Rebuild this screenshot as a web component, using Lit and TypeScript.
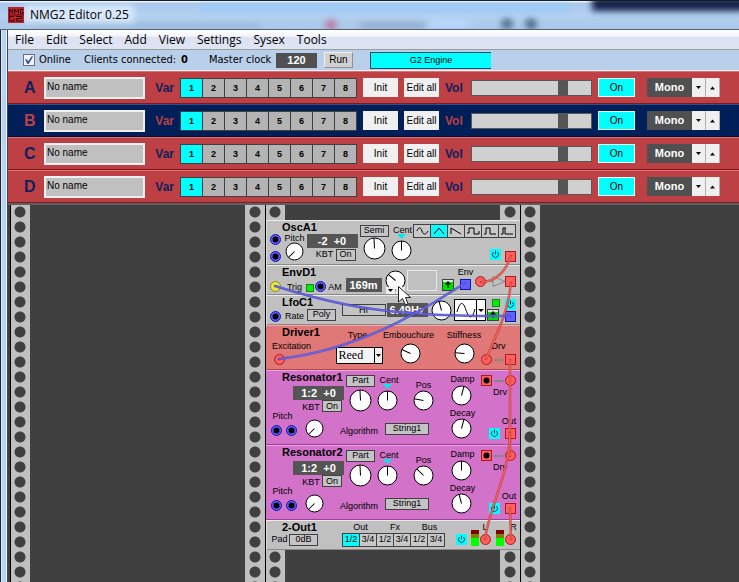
import { LitElement, html, svg, css, nothing, TemplateResult } from "lit";
import { customElement, property, state } from "lit/decorators.js";
import { classMap } from "lit/directives/class-map.js";
import { styleMap } from "lit/directives/style-map.js";

type Kind =
  | "label" | "key" | "display" | "knob" | "centre" | "jack" | "power" | "lamp"
  | "waves" | "routes" | "arrowkey" | "graph" | "amp" | "link" | "spin"
  | "shape" | "model" | "meter";

/** x and y are the centre of the control on its module's panel. */
interface Control {
  kind: Kind;
  x: number;
  y: number;
  text?: string;
  width?: "s" | "m" | "l" | "xl";
  size?: number;
  angle?: number;
  tone?: "red" | "blue" | "yellow";
  form?: "round" | "square";
  hole?: boolean;
}

interface Module {
  name: string;
  units: number;
  skin: "grey" | "coral" | "orchid";
  controls: Control[];
}

const UNIT = 15;
const PITCH = 3;

const label = (text: string, x: number, y: number): Control => ({ kind: "label", text, x, y });
const key = (text: string, x: number, y: number, width: Control["width"] = "s"): Control => ({ kind: "key", text, x, y, width });
const display = (text: string, x: number, y: number, width: Control["width"] = "l"): Control => ({ kind: "display", text, x, y, width });
const knob = (text: string, x: number, y: number, angle: number, size = 21): Control => ({ kind: "knob", text, x, y, angle, size });
const jack = (tone: Control["tone"], form: Control["form"], x: number, y: number, hole = false): Control => ({ kind: "jack", tone, form, x, y, hole });
const part = (kind: Kind, x: number, y: number): Control => ({ kind, x, y });

const resonator = (name: string, pos: number, damp: number, decay: number): Module => ({
  name, units: 5, skin: "orchid",
  controls: [
    key("Part", 94, 10, "m"), display("1:2  +0", 53, 22),
    label("KBT", 45, 37), key("On", 66, 36),
    knob("Coarse", 94, 30, -3, 23),
    label("Cent", 123, 11), part("centre", 121, 17), knob("Cent", 121, 30, 0),
    label("Pos", 157, 15), knob("Pos", 157, 30, pos),
    label("Damp", 197, 9), knob("Damp", 195, 25, damp),
    label("Decay", 196, 44), knob("Decay", 195, 59, decay),
    label("Pitch", 16, 46), jack("blue", "round", 11, 60, true), jack("blue", "round", 26, 60, true),
    knob("Pitch", 48, 59, -135, 19),
    label("Algorithm", 93, 61), key("String1", 141, 59, "l"),
    jack("red", "square", 221, 11, true), part("link", 233, 11), jack("red", "round", 245, 11),
    label("Drv", 234, 23), label("Out", 243, 51),
    part("power", 228, 63), jack("red", "square", 245, 63),
  ],
});

const MODULES: Module[] = [
  {
    name: "OscA1", units: 3, skin: "grey",
    controls: [
      jack("blue", "round", 9, 19, true), label("Pitch", 28, 18),
      jack("blue", "round", 9, 36, true), knob("Pitch", 28, 31, -135, 19),
      display("-2  +0", 66, 21), label("KBT", 59, 35), key("On", 79, 35),
      key("Semi", 108, 10, "m"), knob("Semi", 108, 29, -3, 23),
      label("Cent", 137, 11), part("centre", 135, 17), knob("Cent", 135, 30, 0),
      part("waves", 198, 11), part("power", 229, 35), jack("red", "square", 245, 36),
    ],
  },
  {
    name: "EnvD1", units: 2, skin: "grey",
    controls: [
      jack("yellow", "round", 9, 21), label("Trig", 29, 22), part("lamp", 43, 22),
      jack("blue", "round", 54, 21, true), label("AM", 69, 22),
      display("169m", 98, 19, "s"), knob("Decay", 129, 15, -50), part("spin", 129, 26),
      part("graph", 156, 15), label("Env", 199, 8), part("arrowkey", 181, 20),
      jack("blue", "square", 199, 19), jack("red", "round", 215, 17),
      part("amp", 229, 17), jack("red", "square", 245, 17),
    ],
  },
  {
    name: "LfoC1", units: 2, skin: "grey",
    controls: [
      jack("blue", "round", 9, 21, true), label("Rate", 28, 21), key("Poly", 56, 20, "m"),
      key("HI", 97, 15, "l"), display("6.49Hz", 141, 15, "m"), knob("Rate", 175, 15, -15),
      part("shape", 204, 15), part("lamp", 229, 8), part("power", 244, 9),
      part("arrowkey", 227, 20), jack("blue", "square", 244, 21),
    ],
  },
  {
    name: "Driver1", units: 3, skin: "coral",
    controls: [
      label("Excitation", 25, 21), jack("red", "round", 13, 35),
      label("Type", 91, 10), part("model", 93, 30),
      label("Embouchure", 143, 10), knob("Embouchure", 144, 28, -65),
      label("Stiffness", 198, 10), knob("Stiffness", 198, 28, -85),
      label("Drv", 233, 21), jack("red", "round", 220, 34), part("link", 233, 34),
      jack("red", "square", 244, 34),
    ],
  },
  resonator("Resonator1", -80, 15, 15),
  resonator("Resonator2", -45, 0, -15),
  {
    name: "2-Out1", units: 2, skin: "grey",
    controls: [
      label("Pad", 13, 20), key("0dB", 37, 20, "m"),
      label("Out", 95, 7), label("Fx", 129, 7), label("Bus", 163, 7),
      part("routes", 128, 19), part("power", 195, 19), part("meter", 208, 18),
      label("L", 219, 7), jack("red", "round", 219, 19),
      part("meter", 234, 18), label("R", 247, 7), jack("red", "round", 245, 19),
    ],
  },
];

const WAVES: Array<[string, string]> = [
  ["Sine", "M3 6 C4 2 7 2 8 6 S12 10 14 6"],
  ["Triangle", "M3 9 L8 3 L13 9"],
  ["Saw", "M3 9 V3 L13 9"],
  ["Square", "M2 8 H4 V3 H9 V9 H14 V6"],
  ["Pulse 25", "M2 9 H4 V3 H8 V9 H14"],
  ["Pulse 10", "M2 9 H4 V3 H7 M6 3 V9 H14"],
];

@customElement("synth-knob")
class SynthKnob extends LitElement {
  @property({ type: Number }) size = 21;
  @property({ type: Number }) angle = 0;
  @property() name = "";

  static styles = css`
    :host { display: block; }
    .dial { display: block; }
  `;

  render() {
    const c = this.size / 2;
    const r = c - 1;
    return html`<svg class="dial" width=${this.size} height=${this.size} role="slider" tabindex="0"
      aria-label=${this.name} aria-valuemin="-150" aria-valuemax="150" aria-valuenow=${this.angle}>
      <circle cx=${c} cy=${c} r=${r} fill="#fff" stroke="#000"></circle>
      <line x1=${c} y1=${c} x2=${c} y2="1" stroke="#000" transform="rotate(${this.angle} ${c} ${c})"></line>
    </svg>`;
  }
}

@customElement("synth-jack")
class SynthJack extends LitElement {
  @property() tone = "red";
  @property() form = "round";
  @property({ type: Boolean }) hole = false;

  static styles = css`
    :host { display: block; }
    .jack { display: block; }
  `;

  render() {
    const tones: Record<string, [string, string]> = {
      red: ["#ff5f5f", "#b01818"],
      blue: ["#6060ff", "#1414a8"],
      yellow: ["#e8e840", "#8a8a10"],
    };
    const [fill, edge] = tones[this.tone];
    return html`<svg class="jack" width="11" height="11" aria-hidden="true">
      ${this.form === "round"
        ? svg`<circle cx="5.5" cy="5.5" r="5" fill=${fill} stroke=${edge}></circle>`
        : svg`<rect x="0.5" y="0.5" width="10" height="10" fill=${fill} stroke=${edge}></rect>`}
      ${this.hole ? svg`<circle cx="5.5" cy="5.5" r="3" fill="#000"></circle>` : nothing}
    </svg>`;
  }
}

@customElement("synth-module")
class SynthModule extends LitElement {
  @property({ attribute: false }) module!: Module;

  static styles = css`
    :host { display: block; font: 9px/9px "Liberation Sans", Arial, sans-serif; color: #000; }
    .panel {
      display: grid;
      grid-template-columns: repeat(84, 3px);
      justify-items: center;
      align-items: center;
      white-space: nowrap;
      background: #c0c0c0;
      box-shadow: inset 0 1px #ececec, inset 1px 0 #dcdcdc, inset 0 -1px #8a8a8a;
    }
    .coral { background: #e07878; box-shadow: inset 0 1px #f4a8a8, inset 0 -1px #b04848; }
    .orchid { background: #d272c8; box-shadow: inset 0 1px #f0a4e8, inset 0 -1px #a0409a; }
    .title {
      grid-area: 2 / 6 / span 3 / span 20;
      justify-self: start;
      margin: 0;
      padding-left: 1px;
      font-size: 11px;
      line-height: 9px;
      font-weight: bold;
    }
    button, select {
      box-sizing: border-box;
      margin: 0;
      padding: 0;
      font: inherit;
      color: #000;
      border: 1px solid #404040;
      border-radius: 0;
      background: #c4c4c4;
    }
    .key { height: 12px; width: 20px; }
    .key.m { width: 29px; }
    .key.l { width: 44px; }
    .display {
      width: 36px;
      height: 14px;
      line-height: 14px;
      white-space: pre;
      text-align: center;
      font-size: 11px;
      font-weight: bold;
      color: #fff;
      background: #555;
    }
    .display.m { width: 41px; }
    .display.l { width: 51px; }
    .segments { display: flex; border: 1px solid #404040; gap: 1px; background: #404040; }
    .segments button { width: 16px; height: 12px; border: 0; background: #c8c8c8; }
    .segments .on { background: #00ffff; }
    .icon { display: block; }
    .power { width: 11px; height: 11px; border: 0; background: #00ffff; }
    .lamp { width: 8px; height: 8px; box-sizing: border-box; border: 1px solid #208020; background: #00f000; }
    .arrowkey { width: 12px; height: 12px; background: linear-gradient(#d8e8d8 2px, #00e000 2px); }
    .graph { width: 30px; height: 21px; box-sizing: border-box; border: 1px solid #e8e8e8; }
    .spin { display: flex; gap: 1px; }
    .spin button { width: 9px; height: 7px; border: 0; background: #f0f0f0; }
    .shape { width: 32px; height: 22px; background: #fff; border-color: #000; }
    .model {
      width: 47px;
      height: 17px;
      padding-left: 2px;
      appearance: none;
      border-color: #000;
      font: 12px/15px "Liberation Serif", "Times New Roman", serif;
      background: #f4f4f4;
    }
    .combo { display: flex; }
    .combo .drop { width: 9px; height: 17px; border-color: #000; margin-left: -9px; background: #f0f0f0; }
    .meter { width: 8px; height: 16px; background: linear-gradient(#800000 4px, #808000 4px 8px, #00ff00 8px); }
  `;

  private area(x: number, y: number) {
    const track = (v: number) => {
      const half = Math.round((v * 2) / PITCH);
      const span = half % 2 ? 3 : 2;
      return [(half - span) / 2 + 1, span];
    };
    const [col, cols] = track(x);
    const [row, rows] = track(y);
    return { gridArea: `${row} / ${col} / span ${rows} / span ${cols}` };
  }

  private draw(c: Control): TemplateResult {
    const at = styleMap(this.area(c.x, c.y));
    switch (c.kind) {
      case "label":
        return html`<span style=${at}>${c.text}</span>`;
      case "key":
        return html`<button class="key ${c.width}" style=${at}>${c.text}</button>`;
      case "display":
        return html`<output class="display ${c.width}" style=${at}>${c.text}</output>`;
      case "knob":
        return html`<synth-knob style=${at} .size=${c.size} .angle=${c.angle} .name=${c.text}></synth-knob>`;
      case "jack":
        return html`<synth-jack style=${at} .tone=${c.tone} .form=${c.form} .hole=${c.hole}></synth-jack>`;
      case "centre":
        return html`<svg class="icon" style=${at} width="9" height="5"><path d="M0 0H9L4.5 5Z" fill="#00e8f0"></path></svg>`;
      case "power":
        return html`<button class="power" style=${at} aria-label="Power"><svg class="icon" width="11" height="11">
          <path d="M3.5 3.2 A3 3 0 1 0 7.5 3.2 M5.5 1.5 V5.5" fill="none" stroke="#103050"></path></svg></button>`;
      case "lamp":
        return html`<span class="lamp" style=${at}></span>`;
      case "waves":
        return html`<div class="segments" style=${at} role="group" aria-label="Waveform">
          ${WAVES.map(([name, d], i) => html`<button class=${classMap({ on: i === 1 })} aria-label=${name}>
            <svg class="icon" width="16" height="12"><path d=${d} fill="none" stroke="#000"></path></svg></button>`)}
        </div>`;
      case "routes":
        return html`<div class="segments" style=${at} role="group" aria-label="Destination">
          ${["1/2", "3/4", "1/2", "3/4", "1/2", "3/4"].map((t, i) => html`<button class=${classMap({ on: i === 0 })}>${t}</button>`)}
        </div>`;
      case "arrowkey":
        return html`<button class="arrowkey" style=${at} aria-label="Output type"><svg class="icon" width="10" height="10">
          <path d="M5 1 L8 4.5 H2Z" fill="#000"></path><path d="M5 4V8" stroke="#000"></path></svg></button>`;
      case "graph":
        return html`<span class="graph" style=${at}></span>`;
      case "amp":
        return html`<svg class="icon" style=${at} width="22" height="11">
          <path d="M0 5.5H8M8 .5V10.5L20 5.5Z" fill="none" stroke="#888"></path></svg>`;
      case "link":
        return html`<svg class="icon" style=${at} width="10" height="2"><path d="M0 1H10" stroke="#888" stroke-width="2"></path></svg>`;
      case "spin":
        return html`<div class="spin" style=${at}>
          <button aria-label="Decrease"><svg class="icon" width="9" height="7"><path d="M2 2H7L4.5 5Z"></path></svg></button>
          <button aria-label="Increase"><svg class="icon" width="9" height="7"><path d="M2 5H7L4.5 2Z"></path></svg></button>
        </div>`;
      case "shape":
        return html`<button class="shape" style=${at} aria-label="Wave shape"><svg class="icon" width="30" height="20">
          <path d="M2 12 C5 1 8 1 11 10 S17 20 20 9" fill="none" stroke="#000"></path>
          <path d="M21.5 0V20" stroke="#000"></path><path d="M23 9H29L26 12Z"></path></svg></button>`;
      case "model":
        return html`<div class="combo" style=${at}><select class="model" aria-label="Type"><option>Reed</option></select>
          <button class="drop" aria-hidden="true" tabindex="-1"><svg class="icon" width="7" height="15"><path d="M1 6H6L3.5 9Z"></path></svg></button></div>`;
      case "meter":
        return html`<span class="meter" style=${at}></span>`;
    }
  }

  render() {
    const m = this.module;
    const rows = { gridTemplateRows: `repeat(${(m.units * UNIT) / PITCH}, ${PITCH}px)` };
    return html`<section class="panel ${m.skin}" style=${styleMap(rows)}>
      <h2 class="title">${m.name}</h2>
      ${m.controls.map((c) => this.draw(c))}
    </section>`;
  }
}

@customElement("slot-strip")
class SlotStrip extends LitElement {
  @property() name = "A";
  @property({ type: Boolean, reflect: true }) selected = false;
  @state() private variation = 1;

  static styles = css`
    :host {
      display: flex;
      align-items: center;
      gap: 6px;
      height: 33px;
      box-sizing: border-box;
      padding-left: 16px;
      border-top: 1px solid #e07070;
      border-bottom: 1px solid #801820;
      background: #bc4044;
      color: #10205c;
      font: 10px/12px "Liberation Sans", Arial, sans-serif;
      white-space: nowrap;
    }
    :host([selected]) { background: #001e58; color: #bc4044; border-top-color: #30508c; border-bottom-color: #001038; }
    .slot { width: 14px; margin: 0; font-size: 16px; line-height: 18px; font-weight: bold; }
    .patch {
      box-sizing: border-box;
      width: 101px;
      height: 22px;
      padding: 0 1px 2px;
      border: 2px solid #f0f0f0;
      background: #c0c0c0;
      color: #000;
      font: inherit;
    }
    .tag { width: 20px; font-size: 12px; font-weight: bold; }
    .tag.var { width: 23px; text-align: right; }
    button { box-sizing: border-box; height: 19px; margin: 0; padding: 0; border: 0; border-radius: 0; color: #000; font: inherit; }
    .variations { display: flex; gap: 1px; padding: 1px; background: #404040; }
    .variations button { width: 21px; height: 18px; background: #b4b4b4; font-size: 9px; font-weight: bold; }
    .variations .on { background: #00ffff; }
    .plain { width: 35px; background: #f0f0f0; }
    .level {
      appearance: none;
      box-sizing: border-box;
      width: 121px;
      height: 16px;
      margin: 0;
      border: 1px solid #585858;
      background: #d0d0d0;
    }
    .level::-webkit-slider-thumb { appearance: none; width: 10px; height: 14px; background: #555; }
    .active { width: 37px; border: 1px solid #e8f8f8; background: #00ffff; }
    .mode { display: flex; margin-left: 6px; }
    .mode output {
      width: 45px;
      height: 19px;
      line-height: 19px;
      text-align: center;
      font-size: 11px;
      font-weight: bold;
      color: #fff;
      background: #505050;
    }
    .mode button { width: 14px; background: #f0f0f0; border-right: 1px solid #b0b0b0; }
    .icon { display: block; margin: auto; }
  `;

  render() {
    return html`
      <h2 class="slot">${this.name}</h2>
      <input class="patch" aria-label="Patch name" .value=${"No name"} />
      <span class="tag var">Var</span>
      <div class="variations" role="group" aria-label="Variation">
        ${[1, 2, 3, 4, 5, 6, 7, 8].map((n) => html`<button class=${classMap({ on: n === this.variation })}
          @click=${() => (this.variation = n)}>${n}</button>`)}
      </div>
      <button class="plain">Init</button>
      <button class="plain">Edit all</button>
      <label class="tag" for="level">Vol</label>
      <input id="level" class="level" type="range" min="0" max="127" value="100" />
      <button class="active">On</button>
      <div class="mode">
        <output>Mono</output>
        <button aria-label="Fewer voices"><svg class="icon" width="7" height="4"><path d="M1 0H6L3.5 3Z"></path></svg></button>
        <button aria-label="More voices"><svg class="icon" width="7" height="4"><path d="M1 3.5H6L3.5 .5Z"></path></svg></button>
      </div>`;
  }
}

@customElement("app-root")
class AppRoot extends LitElement {
  static styles = css`
    :host {
      display: flex;
      flex-direction: column;
      min-height: 100vh;
      box-sizing: border-box;
      overflow: hidden;
      font: 11px/14px "DejaVu Sans Condensed", "DejaVu Sans", sans-serif;
      color: #000;
    }
    .titlebar {
      position: relative;
      display: flex;
      align-items: center;
      gap: 6px;
      height: 30px;
      box-sizing: border-box;
      padding-left: 8px;
      border-top: 1px solid #181c24;
      border-bottom: 1px solid #56606e;
      background: linear-gradient(#eaf4ff 1px, #a8c8ec 2px, #b4d0f0 50%, #a9c8ea);
    }
    .glass { position: absolute; inset: 0; width: 100%; height: 100%; }
    .logo { position: relative; display: block; }
    .caption { position: relative; margin: 0; font: 12px/16px "Open Sans", "Noto Sans", sans-serif; }
    .frame {
      flex: 1;
      display: flex;
      flex-direction: column;
      padding-left: 8px;
      background: linear-gradient(90deg, #20242c 1px, #dceafa 1px 2px, #b8d4f4 2px 6px, #e8f0fa 6px 7px, #404850 7px);
    }
    .menu {
      display: flex;
      gap: 12px;
      height: 20px;
      padding-left: 7px;
      align-items: center;
      box-sizing: border-box;
      border-bottom: 1px solid #9aa09c;
      background: linear-gradient(#fff, #f4f6fb 30%, #dde3f2 40%, #dfe4f3);
      font: 12px/16px "Open Sans", "Noto Sans", sans-serif;
    }
    .menu a { color: #000; text-decoration: none; }
    .toolbar {
      display: flex;
      align-items: center;
      height: 21px;
      box-sizing: border-box;
      padding-left: 15px;
      border-bottom: 1px solid #f4f6fa;
      background: #b9cfea;
      white-space: nowrap;
    }
    .online { display: flex; align-items: center; gap: 4px; width: 61px; }
    .tick {
      appearance: none;
      width: 12px;
      height: 12px;
      margin: 0;
      box-sizing: border-box;
      border: 1px solid #6a7078;
      background: #f0f4f8;
      display: grid;
      place-items: center;
    }
    .tick:checked::before {
      content: "";
      width: 8px;
      height: 8px;
      background: #3850a0;
      clip-path: polygon(0 45%, 20% 40%, 40% 65%, 85% 0, 100% 8%, 45% 100%, 30% 100%);
    }
    .clients { width: 97px; }
    .count { width: 28px; font-weight: bold; }
    .clock { width: 67px; }
    .tempo {
      width: 41px;
      height: 15px;
      margin-right: 7px;
      font: bold 11px/15px "Liberation Sans", Arial, sans-serif;
      text-align: center;
      color: #fff;
      background: #505050;
    }
    .toolbar button {
      box-sizing: border-box;
      padding: 0;
      margin: 0;
      border-radius: 0;
      color: #000;
      font: 10px/12px "Liberation Sans", Arial, sans-serif;
    }
    .toolbar .run {
      width: 29px;
      height: 16px;
      border: 1px solid;
      border-color: #f0f0f0 #909090 #909090 #f0f0f0;
      background: #d0d0d0;
    }
    .toolbar .engine {
      width: 121px;
      height: 17px;
      margin-left: 17px;
      border: 1px solid #205060;
      border-right: 0;
      background: #00ffff;
      font-size: 9px;
    }
    .rack {
      flex: 1;
      display: flex;
      overflow: hidden;
      padding-left: 2px;
      border-top: 2px solid #606060;
      background: #404040;
    }
    .bay {
      position: relative;
      flex: none;
      width: 255px;
      box-sizing: border-box;
      padding-top: 15px;
      border-left: 1px solid #000;
      background:
        radial-gradient(circle at 9px 7px, #404040 5px, transparent 6px) 0 0 / 19px 15px repeat-y,
        radial-gradient(circle at 10px 7px, #404040 5px, transparent 6px) 234px 0 / 20px 15px repeat-y,
        linear-gradient(90deg, #c0c0c0 19px, #404040 19px 234px, #c0c0c0 234px);
    }
    .cables { position: absolute; left: 0; top: 0; overflow: visible; pointer-events: none; }
  `;

  private cables() {
    const runs: Array<["red" | "blue", string]> = [
      ["red", "M245 51 C240 66 230 77 215 77"],
      ["red", "M245 78 C242 105 235 120 220 154"],
      ["red", "M244 155 V251"],
      ["red", "M244 228 C243 270 224 300 219 334"],
      ["red", "M244 303 L245 334"],
      ["blue", "M9 81 C70 100 120 112 244 111"],
      ["blue", "M199 78 C150 110 90 145 13 154"],
    ];
    const ink = { red: ["#c83838", "#f06858"], blue: ["#4848c0", "#6868f0"] };
    return html`<svg class="cables" width="254" height="345" aria-hidden="true">
      ${runs.map(([tone, d]) => svg`
        <path d=${d} fill="none" stroke=${ink[tone][0]} stroke-width="2.5" stroke-linecap="round" opacity="0.85"></path>
        <path d=${d} fill="none" stroke=${ink[tone][1]} stroke-width="1.2"></path>`)}
      <path d="M132.5 81.5 V97 L136.5 93.5 L139.5 100 L142 99 L139.5 92.5 L144.5 92.5 Z" fill="#fff" stroke="#222"></path>
    </svg>`;
  }

  render() {
    return html`
      <header class="titlebar">
        <svg class="glass" preserveAspectRatio="none" viewBox="0 0 739 28" aria-hidden="true">
          <defs><filter id="soft" x="-20%" y="-60%" width="140%" height="220%"><feGaussianBlur stdDeviation="3"></feGaussianBlur></filter></defs>
          <g filter="url(#soft)">
            <rect x="24" y="4" width="110" height="18" fill="#d8e8fa"></rect>
            <rect x="200" y="3" width="370" height="8" fill="#9cccf8"></rect>
            <rect x="30" y="23" width="230" height="3" fill="#7c9cc0" opacity="0.7"></rect>
            <rect x="360" y="22" width="66" height="5" fill="#7c94b4" opacity="0.7"></rect>
            <rect x="428" y="18" width="42" height="9" fill="#b8d8fc"></rect>
            <circle cx="331" cy="24" r="6" fill="#c06080" opacity="0.7"></circle>
            <circle cx="507" cy="23" r="6" fill="#405c7c" opacity="0.8"></circle>
            <circle cx="531" cy="23" r="6" fill="#345870" opacity="0.8"></circle>
            <rect x="592" y="-4" width="160" height="14" fill="#142448"></rect>
          </g>
        </svg>
        <svg class="logo" width="16" height="16" aria-hidden="true">
          <rect width="16" height="16" fill="#c02028"></rect>
          <path d="M1.5 7V2L4.5 6V2M6.5 7V2L8.5 5L10.5 2V7M15 2.5H12.5V6.5H15V4.5M6 9.5H1.5V14H6V12M8 9.5H14V11.5H8.5V14H15" fill="none" stroke="#300408"></path>
          <path d="M0 8H16" stroke="#601018"></path>
        </svg>
        <h1 class="caption">NMG2 Editor 0.25</h1>
      </header>
      <div class="frame">
        <nav class="menu">
          ${["File", "Edit", "Select", "Add", "View", "Settings", "Sysex", "Tools"].map((t) => html`<a href="#">${t}</a>`)}
        </nav>
        <div class="toolbar">
          <label class="online"><input class="tick" type="checkbox" checked />Online</label>
          <span class="clients">Clients connected:</span>
          <span class="count">0</span>
          <span class="clock">Master clock</span>
          <output class="tempo">120</output>
          <button class="run">Run</button>
          <button class="engine">G2 Engine</button>
        </div>
        ${["A", "B", "C", "D"].map((n) => html`<slot-strip .name=${n} ?selected=${n === "B"}></slot-strip>`)}
        <main class="rack">
          <div class="bay"></div>
          <div class="bay">
            ${MODULES.map((m) => html`<synth-module .module=${m}></synth-module>`)}
            ${this.cables()}
          </div>
          <div class="bay"></div>
        </main>
      </div>`;
  }
}
